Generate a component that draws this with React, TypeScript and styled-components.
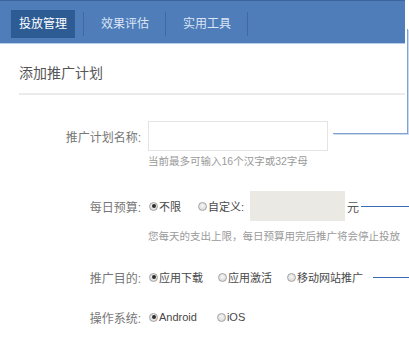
import React from "react";
import styled, { createGlobalStyle } from "styled-components";

const Global = createGlobalStyle`
  html, body { margin: 0; padding: 0; background: #ffffff; }
  body {
    font-family: "Liberation Sans", "Noto Sans CJK SC", sans-serif;
    width: 409px;
    height: 337px;
    overflow: hidden;
  }
`;

const Page = styled.div`
  position: relative;
  width: 409px;
  height: 337px;
`;

const Nav = styled.div`
  width: 405px;
  height: 44px;
  box-sizing: border-box;
  background: #4f7dba;
  border-top: 1px solid #3b659c;
  border-bottom: 1px solid #b8cde9;
  display: flex;
  align-items: center;
  padding-left: 11px;
`;

const Tab = styled.div<{ $active?: boolean }>`
  height: 28px;
  line-height: 28px;
  padding: 0 8px;
  font-size: 12px;
  color: ${(p) => (p.$active ? "#ffffff" : "#dbe5f4")};
  background: ${(p) => (p.$active ? "#2d5b93" : "transparent")};
  margin-top: 4px;
`;

const Sep = styled.div`
  width: 1px;
  height: 24px;
  margin: 4px 9px 0 8px;
  background: #40699f;
`;

const Content = styled.div`
  padding: 0 4px 0 19px;
`;

const Title = styled.div`
  margin-top: 9px;
  height: 40px;
  line-height: 40px;
  font-size: 14px;
  color: #555555;
  border-bottom: 2px solid #ebebeb;
`;

const Row = styled.div<{ $mt: number }>`
  display: flex;
  align-items: center;
  margin-top: ${(p) => p.$mt}px;
  min-height: 20px;
`;

const Label = styled.div`
  width: 122px;
  text-align: right;
  font-size: 12px;
  color: #777777;
  margin-right: 7px;
  flex-shrink: 0;
`;

const TextInput = styled.div`
  width: 180px;
  height: 30px;
  box-sizing: border-box;
  border: 1px solid #e4e4e4;
  background: #ffffff;
`;

const Hint = styled.div<{ $mt: number }>`
  margin-top: ${(p) => p.$mt}px;
  margin-left: 129px;
  font-size: 10.5px;
  line-height: 14px;
  color: #9a9a9a;
  white-space: nowrap;
`;

const Options = styled.div<{ $gap: number }>`
  display: flex;
  align-items: center;
  gap: ${(p) => p.$gap}px;
  flex: none;
`;

const Option = styled.div`
  display: flex;
  align-items: center;
  font-size: 11px;
  color: #484848;
  white-space: nowrap;
`;

const Dot = styled.span<{ $on?: boolean }>`
  width: 9px;
  height: 9px;
  box-sizing: border-box;
  border-radius: 50%;
  border: 1px solid #a2a2a2;
  background: radial-gradient(circle at 50% 40%, #f7f7f7 0%, #d3d3d3 100%);
  margin: 0 1px 0 1px;
  display: inline-flex;
  align-items: center;
  justify-content: center;
  &::after {
    content: "";
    display: ${(p) => (p.$on ? "block" : "none")};
    width: 4px;
    height: 4px;
    border-radius: 50%;
    background: #2e2e2e;
  }
`;

const Amount = styled.div`
  width: 95px;
  height: 30px;
  background: #eae9e4;
  margin-left: 6px;
`;

const Unit = styled.span`
  font-size: 12px;
  color: #555555;
  margin-left: 2px;
`;

const Connector = styled.div<{ $ml: number }>`
  flex: 1;
  height: 0;
  border-top: 1px solid #3a6cb3;
  margin-left: ${(p) => p.$ml}px;
  margin-right: -4px;
`;

const Callout = styled.div`
  position: absolute;
  left: 333px;
  top: 29px;
  width: 74px;
  height: 104px;
  border-right: 1px solid #7fa2d1;
  border-bottom: 1px solid #7fa2d1;
  box-shadow: 1px 1px 0 #c9d9ee;
  pointer-events: none;
`;

const Radio = ({ on, children }: { on?: boolean; children: React.ReactNode }) => (
  <Option>
    <Dot $on={on} />
    {children}
  </Option>
);

export default function App() {
  return (
    <Page>
      <Global />
      <Nav>
        <Tab $active>投放管理</Tab>
        <Sep />
        <Tab>效果评估</Tab>
        <Sep />
        <Tab>实用工具</Tab>
        <Sep />
      </Nav>
      <Content>
        <Title>添加推广计划</Title>
        <Row $mt={26}>
          <Label>推广计划名称:</Label>
          <TextInput />
        </Row>
        <Hint $mt={3}>当前最多可输入16个汉字或32字母</Hint>
        <Row $mt={23}>
          <Label>每日预算:</Label>
          <Options $gap={16}>
            <Radio on>不限</Radio>
            <Radio>自定义:</Radio>
          </Options>
          <Amount />
          <Unit>元</Unit>
          <Connector $ml={2} />
        </Row>
        <Hint $mt={8}>您每天的支出上限，每日预算用完后推广将会停止投放</Hint>
        <Row $mt={24}>
          <Label>推广目的:</Label>
          <Options $gap={14}>
            <Radio on>应用下载</Radio>
            <Radio>应用激活</Radio>
            <Radio>移动网站推广</Radio>
          </Options>
          <Connector $ml={10} />
        </Row>
        <Row $mt={20}>
          <Label>操作系统:</Label>
          <Options $gap={19}>
            <Radio on>Android</Radio>
            <Radio>iOS</Radio>
          </Options>
        </Row>
      </Content>
      <Callout />
    </Page>
  );
}
